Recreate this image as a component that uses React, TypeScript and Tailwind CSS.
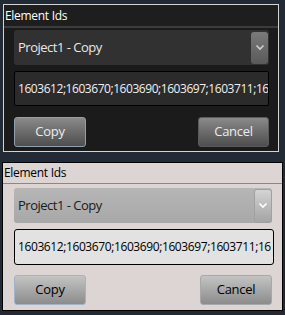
import React from "react";

type Theme = "dark" | "light";

function Chevron({ color }: { color: string }) {
  return (
    <svg width="10" height="7" viewBox="0 0 10 7" fill="none">
      <path d="M1.5 1.5 L5 5 L8.5 1.5" stroke={color} strokeWidth="1.6" />
    </svg>
  );
}

function Panel({ theme }: { theme: Theme }) {
  const dark = theme === "dark";
  return (
    <div
      className={
        dark
          ? "ml-[3px] mt-[4px] h-[148px] w-[276px] border border-[#d4d4d4] bg-[#1b1b1b]"
          : "ml-[2px] mt-[10px] h-[149px] w-[281px] border border-black bg-[#ddd5d3]"
      }
    >
      {/* title */}
      <div
        className={
          dark
            ? "h-[23px] border-b-2 border-[#3c3c3c] bg-[#1e1e1e] pl-[1px] text-[12px] leading-[22px] tracking-[-0.3px] text-white"
            : "h-[21px] border-b border-[#8c8684] pl-[1px] text-[12px] leading-[20px] tracking-[-0.3px] text-black"
        }
      >
        Element Ids
      </div>

      <div className={dark ? "pl-[10px] pr-[9px] pt-[2px]" : "pl-[11px] pr-[8px] pt-[4px]"}>
        {/* dropdown */}
        <div
          className={
            dark
              ? "flex h-[35px] items-center rounded-[3px] bg-[#313131] pr-[1px]"
              : "mr-[2px] flex h-[35px] items-center rounded-[3px] bg-gradient-to-b from-[#b6b6b6] to-[#a8a8a8]"
          }
        >
          <span
            className={
              dark
                ? "flex-1 pl-[4px] text-[13px] tracking-[-0.5px] text-[#e8e8e8]"
                : "flex-1 pl-[4px] text-[13px] tracking-[-0.5px] text-[#1a1a1a]"
            }
          >
            Project1 - Copy
          </span>
          <div
            className={
              dark
                ? "flex h-[32px] w-[17px] items-center justify-center rounded-[3px] bg-gradient-to-b from-[#7a7a7a] to-[#5a5a5a]"
                : "flex h-[34px] w-[18px] items-center justify-center rounded-[3px] border border-[#a0a0a0] bg-gradient-to-b from-[#d4d4d4] to-[#a4a4a4]"
            }
          >
            <Chevron color={dark ? "#cfcfcf" : "#ffffff"} />
          </div>
        </div>

        {/* ids field */}
        <div
          className={
            dark
              ? "mt-[6px] flex h-[35px] items-center overflow-hidden whitespace-nowrap rounded-[2px] border border-black bg-[#2b2b2b] pl-[3px] text-[12px] tracking-[-0.45px] text-[#f0f0f0]"
              : "mt-[6px] flex h-[36px] items-center overflow-hidden whitespace-nowrap rounded-[3px] border border-black bg-[#e2e2e2] pl-[3px] text-[12px] tracking-[-0.4px] text-black"
          }
        >
          1603612;1603670;1603690;1603697;1603711;16
        </div>

        {/* buttons */}
        <div className={dark ? "mt-[11px] flex justify-between" : "mt-[10px] flex justify-between pr-[2px]"}>
          <button
            className={
              dark
                ? "h-[30px] w-[72px] rounded-[3px] border border-[#8fa0b0] bg-gradient-to-b from-[#8a8a8a] to-[#4e4e4e] text-[13px] tracking-[-0.3px] text-[#ececec]"
                : "h-[30px] w-[72px] rounded-[3px] border border-[#9fb4c8] bg-gradient-to-b from-[#c4c4c4] to-[#8c8c8c] text-[13px] tracking-[-0.3px] text-black"
            }
          >
            Copy
          </button>
          <button
            className={
              dark
                ? "h-[30px] w-[71px] rounded-[3px] border border-[#5a5a5a] bg-gradient-to-b from-[#8a8a8a] to-[#4e4e4e] text-[13px] tracking-[-0.3px] text-[#ececec]"
                : "h-[30px] w-[72px] rounded-[3px] border border-[#a8a8a8] bg-gradient-to-b from-[#c4c4c4] to-[#8c8c8c] text-[13px] tracking-[-0.3px] text-black"
            }
          >
            Cancel
          </button>
        </div>
      </div>
    </div>
  );
}

export default function App() {
  return (
    <div
      className="h-[315px] w-[285px] overflow-hidden bg-[#222a36]"
      style={{ fontFamily: '"Open Sans", "Noto Sans", sans-serif' }}
    >
      <Panel theme="dark" />
      <Panel theme="light" />
    </div>
  );
}
